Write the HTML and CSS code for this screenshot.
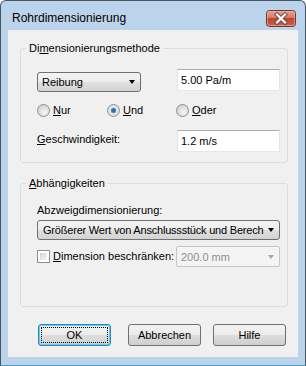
FILE: index.html
```html
<!DOCTYPE html>
<html lang="de">
<head>
<meta charset="utf-8">
<title>Rohrdimensionierung</title>
<link rel="stylesheet" href="styles.css">
</head>
<body>
<div class="window">
  <div class="titlebar">
    <span class="title">Rohrdimensionierung</span>
    <span class="close">
      <svg width="30" height="17" viewBox="0 0 30 17">
        <defs>
          <linearGradient id="cg" x1="0" y1="0" x2="0" y2="1">
            <stop offset="0" stop-color="#e8a493"/>
            <stop offset="0.45" stop-color="#d47a67"/>
            <stop offset="0.5" stop-color="#c0432c"/>
            <stop offset="1" stop-color="#d0624a"/>
          </linearGradient>
        </defs>
        <rect x="0.5" y="0.5" width="29" height="16" rx="3" fill="url(#cg)" stroke="#7a3328"/>
        <rect x="1.5" y="1.5" width="27" height="14" rx="2" fill="none" stroke="#eab9ad" stroke-opacity="0.6"/>
        <path d="M11 4.5 L19 12.5 M19 4.5 L11 12.5" stroke="#6b4a44" stroke-width="4" stroke-linecap="square"/>
        <path d="M11 4.5 L19 12.5 M19 4.5 L11 12.5" stroke="#ffffff" stroke-width="2.2" stroke-linecap="square"/>
      </svg>
    </span>
  </div>
  <div class="client">
    <fieldset class="group group-method">
      <legend>Di<u>m</u>ensionierungsmethode</legend>
      <div class="row row-method">
        <div class="combo combo-method"><span class="combo-text">Reibung</span><span class="arrow"></span></div>
        <div class="edit">5.00 Pa/m</div>
      </div>
      <div class="row row-radios">
        <span class="opt"><span class="radio"></span><span><u>N</u>ur</span></span>
        <span class="opt"><span class="radio checked"></span><span><u>U</u>nd</span></span>
        <span class="opt"><span class="radio"></span><span><u>O</u>der</span></span>
      </div>
      <div class="row row-speed">
        <span class="label"><u>G</u>eschwindigkeit:</span>
        <div class="edit">1.2 m/s</div>
      </div>
    </fieldset>

    <fieldset class="group group-dep">
      <legend><u>A</u>bhängigkeiten</legend>
      <div class="caption">Abzweigdimensionierung:</div>
      <div class="combo combo-wide"><span class="combo-text">Größerer Wert von Anschlussstück und Berech</span><span class="arrow"></span></div>
      <div class="row row-limit">
        <span class="opt opt-check"><span class="check"></span><span><u>D</u>imension beschränken:</span></span>
        <div class="combo combo-disabled"><span class="combo-text">200.0 mm</span><span class="arrow"></span></div>
      </div>
    </fieldset>

    <div class="buttons">
      <div class="btn btn-default"><span class="focus">OK</span></div>
      <div class="btn btn-cancel">Abbrechen</div>
      <div class="btn btn-help">Hilfe</div>
    </div>
  </div>
</div>
</body>
</html>
```

FILE: styles.css
```css
html, body {
  margin: 0;
  padding: 0;
  background: #ffffff;
}

.window {
  box-sizing: border-box;
  width: 306px;
  height: 366px;
  border: 1px solid #4a5560;
  border-bottom-color: #34a7c7;
  border-radius: 6px 6px 0 0;
  background: #bcd3ec;
  padding: 0 7px 8px 7px;
  display: flex;
  flex-direction: column;
  font-family: "Liberation Sans", Arial, sans-serif;
  font-size: 11px;
  line-height: 13px;
  color: #000000;
}

.titlebar {
  height: 29px;
  display: flex;
  align-items: flex-start;
  justify-content: space-between;
  flex: none;
}

.title {
  font-size: 12px;
  line-height: 15px;
  padding: 10px 0 0 4px;
  color: #000000;
}

.close {
  display: block;
  margin: 9px 2px 0 0;
  height: 17px;
}

.close svg {
  display: block;
}

.client {
  flex: 1;
  background: #f0f0f0;
  padding: 0 10px 0 12px;
  display: flex;
  flex-direction: column;
}

.group {
  margin: 0;
  border: 1px solid #d5dfe5;
  border-radius: 3px;
  padding: 0 7px 0 16px;
  min-width: 0;
}

.group legend {
  margin-left: -11px;
  padding: 0 3px;
  line-height: 13px;
}

.group-method {
  margin-top: 12px;
  padding-top: 14px;
  padding-bottom: 10px;
}

.group-dep {
  margin-top: 14px;
  padding-top: 14px;
  padding-bottom: 39px;
}

.row {
  display: flex;
  align-items: flex-start;
}

.row-method .combo-method {
  margin-top: 3px;
}

.row-method .edit,
.row-speed .edit,
.row-limit .combo-disabled {
  margin-left: auto;
}

.row-radios {
  margin-top: 12px;
  display: grid;
  grid-template-columns: 70px 69px auto;
}

.row-speed {
  margin-top: 13px;
}

.row-speed .label {
  padding-top: 3px;
}

.opt {
  display: flex;
  align-items: center;
  gap: 3px;
  height: 13px;
}

.combo {
  box-sizing: border-box;
  height: 20px;
  border: 1px solid #707070;
  border-radius: 3px;
  background: linear-gradient(#f4f4f4 0%, #ececec 50%, #dfdfdf 51%, #d3d3d3 100%);
  display: flex;
  align-items: center;
  padding: 0 5px 0 4px;
  position: relative;
}

.combo-text {
  flex: 1;
  white-space: nowrap;
  overflow: hidden;
  padding-top: 1px;
}

.arrow {
  flex: none;
  width: 0;
  height: 0;
  border-left: 3.5px solid transparent;
  border-right: 3.5px solid transparent;
  border-top: 4px solid #000000;
  margin-left: 6px;
  margin-right: 0;
}

.combo-method {
  width: 104px;
}

.edit {
  box-sizing: border-box;
  width: 103px;
  height: 22px;
  background: #ffffff;
  border: 1px solid #e2e3ea;
  border-top-color: #abadb3;
  border-bottom-color: #e3e9ef;
  padding: 4px 3px 0 3px;
}

.caption {
  height: 13px;
}

.combo-wide {
  margin-top: 3px;
  width: 243px;
  padding-left: 4px;
}

.combo-wide .combo-text {
  padding-left: 1px;
  letter-spacing: -0.2px;
  overflow: visible;
}

.combo-wide .arrow {
  margin-left: 4px;
}

.row-limit {
  margin-top: 6px;
  align-items: center;
  height: 21px;
}

.combo-disabled {
  width: 104px;
  height: 21px;
  border-color: #c4c7ca;
  background: #f4f4f4;
  color: #8d8d8d;
  border-radius: 2px;
}

.combo-disabled .arrow {
  border-top-color: #a6a6a6;
}

.radio {
  box-sizing: border-box;
  width: 13px;
  height: 13px;
  border-radius: 50%;
  border: 1px solid #8c8f93;
  background: radial-gradient(circle at 60% 65%, #f7f7f7 0%, #dcdcdc 55%, #c6c8ca 100%);
  position: relative;
  flex: none;
}

.radio.checked {
  background: radial-gradient(circle at 50% 50%, #2f6fa1 0%, #2f6fa1 22%, #7cc3ea 36%, #e8e8e8 40%, #d6d6d6 100%);
}

.check {
  box-sizing: border-box;
  width: 13px;
  height: 13px;
  border: 1px solid #8e8f8f;
  background: #ffffff;
  padding: 2px;
  flex: none;
  position: relative;
}

.check::before {
  content: "";
  display: block;
  width: 100%;
  height: 100%;
  background: linear-gradient(135deg, #cbcfd5 0%, #e8e9eb 60%, #f6f6f6 100%);
}

.opt-check {
  height: 21px;
}

.buttons {
  display: flex;
  margin-top: 17px;
  padding-left: 18px;
}

.btn {
  box-sizing: border-box;
  width: 73px;
  height: 22px;
  border: 1px solid #707070;
  border-radius: 3px;
  background: linear-gradient(#f2f2f2 0%, #ebebeb 50%, #dddddd 51%, #cfcfcf 100%);
  display: flex;
  align-items: center;
  justify-content: center;
}

.btn-default {
  border-color: #3c7fb1;
  box-shadow: inset 0 0 0 1px #48d8fb;
  padding: 2px;
}

.btn-default .focus {
  box-sizing: border-box;
  width: 100%;
  height: 100%;
  border: 1px dotted #000000;
  display: flex;
  align-items: center;
  justify-content: center;
}

.btn-cancel {
  margin-left: 17px;
}

.btn-help {
  margin-left: 12px;
}
```
